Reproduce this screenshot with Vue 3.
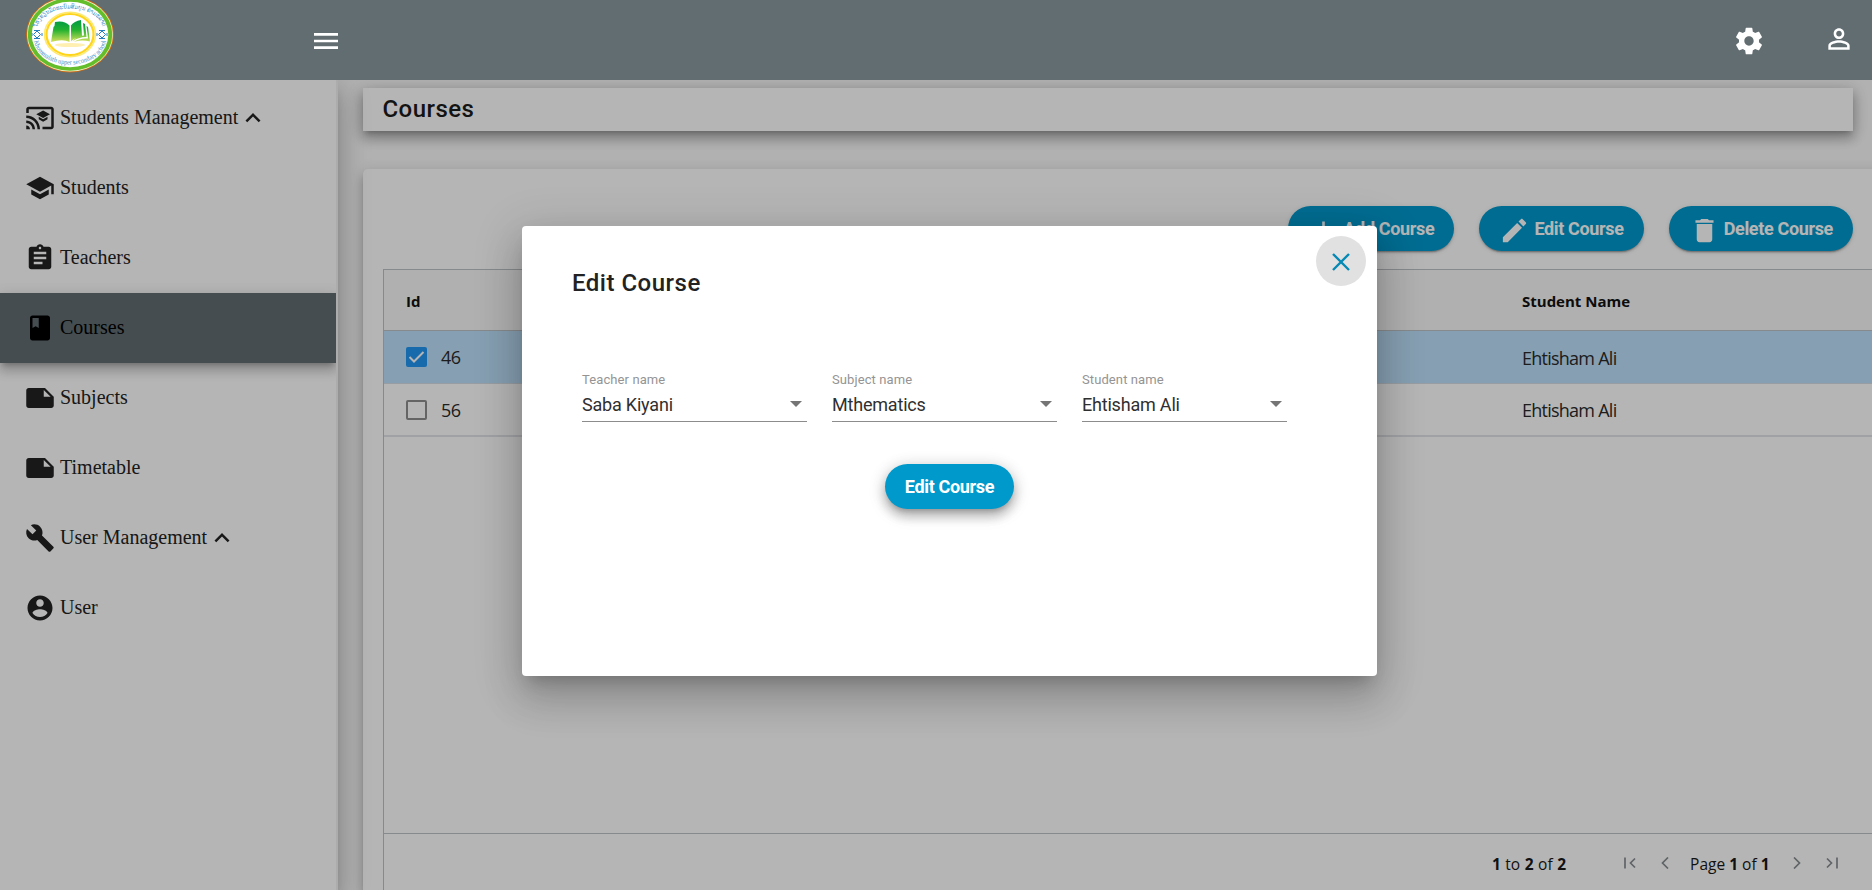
<script setup>
const icons = {
  cast: 'M21 3H3c-1.1 0-2 .9-2 2v3h2V5h18v14h-7v2h7c1.1 0 2-.9 2-2V5c0-1.1-.9-2-2-2zM1 18v3h3c0-1.66-1.34-3-3-3zm0-4v2c2.76 0 5 2.24 5 5h2c0-3.87-3.13-7-7-7zm0-4v2c4.97 0 9 4.03 9 9h2c0-6.08-4.93-11-11-11zm10 1.09v2L14.5 15l3.5-1.91v-2L14.5 13 11 11.090zM14.5 6L9 9l5.5 3L20 9l-5.500-3z',
  school: 'M5 13.180v4L12 21l7-3.820v-4L12 17l-7-3.820zM12 3L1 9l11 6 9-4.910V17h2V9L12 3z',
  assignment: 'M19 3h-4.180C14.400 1.840 13.300 1 12 1c-1.300 0-2.400.840-2.820 2H5c-1.100 0-2 .900-2 2v14c0 1.100.900 2 2 2h14c1.100 0 2-.900 2-2V5c0-1.100-.900-2-2-2zm-7 0c.550 0 1 .450 1 1s-.450 1-1 1-1-.450-1-1 .450-1 1-1zm2 14H7v-2h7v2zm3-4H7v-2h10v2zm0-4H7V7h10v2z',
  book: 'M18 2H6c-1.100 0-2 .900-2 2v16c0 1.100.900 2 2 2h12c1.100 0 2-.900 2-2V4c0-1.100-.900-2-2-2zM6 4h5v8l-2.500-1.500L6 12V4z',
  note: 'M3 4c-1.100 0-1.990.900-1.990 2L1 18c0 1.100.900 2 2 2h18c1.100 0 2-.900 2-2V11l-7-7H3zm12 7V5.500l5.500 5.500H15z',
  build: 'M22.700 19l-9.100-9.100c.900-2.300.400-5-1.500-6.900-2-2-5-2.400-7.400-1.300L9 6 6 9 1.600 4.700C.400 7.100.900 10.100 2.900 12.100c1.900 1.900 4.600 2.400 6.900 1.500l9.100 9.100c.400.400 1 .400 1.400 0l2.300-2.300c.500-.400.500-1.100.100-1.400z',
  account: 'M12 2C6.480 2 2 6.480 2 12s4.480 10 10 10 10-4.480 10-10S17.520 2 12 2zm0 3c1.660 0 3 1.340 3 3s-1.340 3-3 3-3-1.340-3-3 1.340-3 3-3zm0 14.200c-2.500 0-4.710-1.280-6-3.220.030-1.990 4-3.080 6-3.080 1.990 0 5.970 1.090 6 3.080-1.290 1.940-3.500 3.220-6 3.220z',
  less: 'M12 8l-6 6 1.410 1.410L12 10.830l4.590 4.580L18 14z',
  menu: 'M3 18h18v-2H3v2zm0-5h18v-2H3v2zm0-7v2h18V6H3z',
  settings: 'M19.430 12.980c.040-.320.070-.640.070-.980s-.030-.660-.070-.980l2.110-1.650c.190-.150.240-.420.120-.640l-2-3.460c-.120-.220-.390-.300-.610-.220l-2.490 1c-.520-.400-1.080-.730-1.690-.980l-.380-2.650C14.460 2.180 14.250 2 14 2h-4c-.250 0-.460.180-.490.420l-.380 2.650c-.610.250-1.170.590-1.690.980l-2.490-1c-.230-.090-.490 0-.610.220l-2 3.460c-.130.220-.070.490.120.640l2.110 1.650c-.040.320-.070.650-.070.980s.030.660.070.980l-2.110 1.650c-.190.150-.240.420-.120.640l2 3.460c.120.220.390.300.610.220l2.490-1c.520.400 1.080.730 1.690.980l.380 2.650c.030.240.240.420.490.420h4c.250 0 .460-.180.490-.420l.380-2.650c.610-.250 1.170-.590 1.690-.980l2.490 1c.230.090.490 0 .610-.220l2-3.460c.120-.220.070-.490-.120-.640l-2.110-1.650zM12 15.500c-1.930 0-3.500-1.570-3.500-3.500s1.570-3.500 3.500-3.500 3.500 1.570 3.500 3.500-1.570 3.500-3.500 3.500z',
  person: 'M12 5.900c1.160 0 2.100.940 2.100 2.100s-.940 2.100-2.100 2.100S9.900 9.160 9.900 8s.940-2.100 2.100-2.100m0 9c2.970 0 6.100 1.460 6.100 2.100v1.100H5.900V17c0-.640 3.130-2.100 6.100-2.100M12 4C9.790 4 8 5.790 8 8s1.790 4 4 4 4-1.790 4-4-1.790-4-4-4zm0 9c-2.670 0-8 1.340-8 4v3h16v-3c0-2.660-5.330-4-8-4z',
  add: 'M19 13h-6v6h-2v-6H5v-2h6V5h2v6h6v2z',
  edit: 'M3 17.250V21h3.750L17.810 9.940l-3.750-3.750L3 17.250zM20.710 7.040c.390-.390.390-1.020 0-1.410l-2.340-2.340c-.390-.390-1.020-.390-1.410 0l-1.830 1.830 3.750 3.750 1.830-1.830z',
  trash: 'M6 19c0 1.100.900 2 2 2h8c1.100 0 2-.900 2-2V7H6v12zM19 4h-3.500l-1-1h-5l-1 1H5v2h14V4z'
}

const menu = [
  { label: 'Students Management', icon: 'cast', expanded: true },
  { label: 'Students', icon: 'school' },
  { label: 'Teachers', icon: 'assignment' },
  { label: 'Courses', icon: 'book', active: true },
  { label: 'Subjects', icon: 'note' },
  { label: 'Timetable', icon: 'note' },
  { label: 'User Management', icon: 'build', expanded: true },
  { label: 'User', icon: 'account' }
]

const actions = [
  { label: 'Add Course', icon: 'add' },
  { label: 'Edit Course', icon: 'edit' },
  { label: 'Delete Course', icon: 'trash' }
]

const rows = [
  { id: 46, student: 'Ehtisham Ali', selected: true },
  { id: 56, student: 'Ehtisham Ali', selected: false }
]

const fields = [
  { label: 'Teacher name', value: 'Saba Kiyani' },
  { label: 'Subject name', value: 'Mthematics' },
  { label: 'Student name', value: 'Ehtisham Ali' }
]
</script>

<template>
  <div class="app">
    <header class="topbar">
      <svg class="logo" width="90" height="76" viewBox="0 0 90 76">
        <defs>
          <linearGradient id="leaf" x1="0" y1="0" x2="0" y2="1">
            <stop offset="0" stop-color="#009a45" />
            <stop offset=".45" stop-color="#22b12f" />
            <stop offset="1" stop-color="#d5e05a" />
          </linearGradient>
          <path id="arcTop" d="M12.500 31.500A32.500 20 0 0 1 77.500 31.500" />
          <path id="arcBottom" d="M9 42A36 25.500 0 0 0 81 42" />
        </defs>
        <ellipse cx="45" cy="37.500" rx="44" ry="38" fill="#c96b12" />
        <ellipse cx="45" cy="37.500" rx="43" ry="37" fill="#f3f3d0" />
        <ellipse cx="45" cy="37.500" rx="42.300" ry="36.300" fill="#64bd2b" />
        <ellipse cx="45" cy="37.500" rx="38.300" ry="32.800" fill="#fff" />
        <ellipse cx="45" cy="37.500" rx="25.500" ry="22.300" fill="#fff" stroke="#ffe96b" stroke-width="1.500" />
        <ellipse cx="45" cy="37.500" rx="23.500" ry="20.500" fill="#fff" stroke="#ffd51c" stroke-width="2.200" />
        <text class="ring-text lao"><textPath href="#arcTop" startOffset="50%" text-anchor="middle" textLength="80" lengthAdjust="spacingAndGlyphs">ໂຮງຮຽນມັດທະຍົມສົມບູນ ຄໍາມະລາດ</textPath></text>
        <text class="ring-text"><textPath href="#arcBottom" startOffset="50%" text-anchor="middle" textLength="93" lengthAdjust="spacingAndGlyphs">Khommalath upper secondary school</textPath></text>
        <g fill="none" stroke="#287fc0" stroke-width="1">
          <path d="M12 34l3.500 3.500-3.500 3.500-3.500-3.500z" /><path d="M9 33.500h6M9 41.500h6M7 36v3M17 36v3" />
          <path d="M77 34l3.500 3.500-3.500 3.500-3.500-3.500z" /><path d="M74 33.500h6M74 41.500h6M72 36v3M82 36v3" />
        </g>
        <ellipse cx="45" cy="48" rx="15" ry="2" fill="#ffefb0" />
        <path fill="url(#leaf)" d="M30 25Q39 23 44.500 28.500V45Q38 41.500 26 45L28.500 30L29.500 29ZM46 28.500Q49 24 56 23L57 39Q50 40 46 44.500ZM58 26L60 27L61.500 40Q53 40 47.500 44.500Q51 39 59 38.500ZM61.500 29L63 30L65 44.500Q56 42.500 49 45Q54 41 63 41.500Z" />
      </svg>
      <svg class="icon-lg burger" viewBox="0 0 24 24"><path :d="icons.menu" /></svg>
      <svg class="icon-lg gear" viewBox="0 0 24 24"><path :d="icons.settings" /></svg>
      <svg class="icon-lg person" viewBox="0 0 24 24"><path :d="icons.person" /></svg>
    </header>

    <div class="body">
      <nav class="sidebar">
        <a v-for="item in menu" :key="item.label" class="nav-item" :class="{ active: item.active }">
          <svg class="nav-icon" viewBox="0 0 24 24"><path :d="icons[item.icon]" /></svg>
          <span class="nav-label">{{ item.label }}</span>
          <svg v-if="item.expanded" class="nav-chevron" viewBox="0 0 24 24"><path :d="icons.less" /></svg>
        </a>
      </nav>

      <main class="content">
        <h1 class="page-title">Courses</h1>
        <section class="card">
          <div class="actions">
            <button v-for="a in actions" :key="a.label" class="pill">
              <svg class="pill-icon" viewBox="0 0 24 24"><path :d="icons[a.icon]" /></svg>
              <span class="pill-text">{{ a.label }}</span>
            </button>
          </div>
          <div class="grid">
            <div class="grid-row grid-head"><span class="col-id">Id</span><span>Student Name</span></div>
            <div v-for="r in rows" :key="r.id" class="grid-row" :class="{ selected: r.selected }">
              <span class="col-id">
                <i class="check" :class="{ on: r.selected }">
                  <svg v-if="r.selected" width="21" height="20" viewBox="0 0 21 20"><path d="M3.500 10L8 14.500L17.500 5" fill="none" stroke="#fff" stroke-width="2" /></svg>
                </i>{{ r.id }}
              </span>
              <span class="cell">{{ r.student }}</span>
            </div>
            <div class="grid-space"></div>
            <footer class="pager">
              <span class="range"><b>1</b> to <b>2</b> of <b>2</b></span>
              <svg class="pg first" width="12" height="12" viewBox="0 0 12 12"><path d="M1 .500v11M11 1.500L6.500 6L11 10.500" /></svg>
              <svg class="pg prev" width="8" height="12" viewBox="0 0 8 12"><path d="M7 .500L1.500 6L7 11.500" /></svg>
              <span class="page"><span>Page</span> <b>1</b> of <b>1</b></span>
              <svg class="pg next" width="8" height="12" viewBox="0 0 8 12"><path d="M1 .500L6.500 6L1 11.500" /></svg>
              <svg class="pg last" width="12" height="12" viewBox="0 0 12 12"><path d="M11 .500v11M1 1.500L5.500 6L1 10.500" /></svg>
            </footer>
          </div>
        </section>
      </main>
    </div>

    <div class="backdrop">
      <div class="dialog">
        <button class="close"><svg width="18" height="18" viewBox="0 0 18 18"><path d="M1 1l16 16M17 1L1 17" fill="none" stroke="#0489b5" stroke-width="2.400" /></svg></button>
        <h2 class="dialog-title">Edit Course</h2>
        <div class="fields">
          <div v-for="f in fields" :key="f.label" class="field">
            <label class="field-label">{{ f.label }}</label>
            <div class="field-value"><span>{{ f.value }}</span><i class="arrow"></i></div>
          </div>
        </div>
        <button class="pill submit"><span class="pill-text">Edit Course</span></button>
      </div>
    </div>
  </div>
</template>

<style>
html, body { margin: 0; overflow: hidden; }
</style>

<style scoped>
* { box-sizing: border-box; }
.app { position: relative; width: 1872px; height: 890px; overflow: hidden; display: flex; flex-direction: column; background: #fafafa; font-family: Roboto, sans-serif; }
.topbar { position: relative; z-index: 5; flex: none; height: 80px; padding: 0 17px 0 25px; display: flex; align-items: center; background: #626d72; }
.logo { align-self: flex-start; margin-top: -3px; flex: none; }
.ring-text { font: 7px "Liberation Serif", serif; fill: #3d8fca; }
.ring-text.lao { font: 6px "DejaVu Sans", sans-serif; }
.icon-lg { width: 32px; height: 32px; flex: none; fill: #fff; }
.burger { margin: 2px 0 0 195px; }
.gear { margin: 2px 0 0 auto; }
.person { margin: -2px 0 0 58px; }

.body { flex: 1; min-height: 0; display: flex; }
.sidebar { position: relative; z-index: 2; flex: none; width: 338px; padding-top: 3px; background: #fff; border-right: 2px solid #f3f3f3; box-shadow: 0 8px 10px -5px rgba(0,0,0,.2), 0 16px 24px 2px rgba(0,0,0,.14), 0 6px 30px 5px rgba(0,0,0,.12); }
.nav-item { display: flex; align-items: center; height: 70px; padding-left: 25px; color: #222; }
.nav-item.active { position: relative; color: #000; background: #626d72; box-shadow: 0 5px 5px -3px rgba(0,0,0,.2), 0 8px 10px 1px rgba(0,0,0,.14), 0 3px 14px 2px rgba(0,0,0,.12); clip-path: inset(-10px 0 -30px 0); }
.nav-icon, .nav-chevron { width: 30px; height: 30px; fill: currentColor; flex: none; }
.nav-label { margin-left: 5px; padding-bottom: 2px; font: 20px/30px "Liberation Serif", serif; }

.content { flex: 1; min-width: 0; padding: 8px 0 0 25px; display: flex; flex-direction: column; }
.page-title { flex: none; width: 1490px; height: 43px; margin: 0; padding-left: 19.500px; background: #fff; font: 500 24px/43px Roboto, sans-serif; letter-spacing: .45px; color: #1c1c1c; box-shadow: 0 5px 5px -3px rgba(0,0,0,.2), 0 8px 10px 1px rgba(0,0,0,.14), 0 3px 14px 2px rgba(0,0,0,.12), 0 4px 20px rgba(0,0,0,.12); }
.card { flex: 1; width: 1540px; margin-top: 38px; padding: 37px 0 0 20px; display: flex; flex-direction: column; background: #fff; border-radius: 5px 0 0 0; box-shadow: 0 5px 5px -3px rgba(0,0,0,.2), 0 8px 10px 1px rgba(0,0,0,.14), 0 3px 14px 2px rgba(0,0,0,.12); }
.actions { display: flex; justify-content: flex-end; gap: 25px; padding-right: 50px; }
.pill { display: flex; align-items: center; height: 45px; padding: 0 20px; border: 0; border-radius: 23px; background: #09c; color: #fff; box-shadow: 0 3px 1px -2px rgba(0,0,0,.2), 0 2px 2px rgba(0,0,0,.14), 0 1px 5px rgba(0,0,0,.12); }
.pill-icon { width: 31px; height: 31px; margin: 4px 4px 0 0; fill: #fff; }
.pill-text { font: 700 18px/45px Roboto, sans-serif; letter-spacing: -.34px; white-space: nowrap; }

.grid { flex: 1; margin-top: 18px; border: 1px solid #bfc3c6; border-bottom: 0; display: flex; flex-direction: column; font: 18px "Open Sans", sans-serif; color: #2a2a2a; }
.grid-row { display: flex; align-items: center; height: 53px; padding-left: 22px; border-bottom: 2px solid #e2e3e8; }
.grid-head { height: 61px; padding-left: 22px; padding-top: 2px; background: #f8f8f8; border-bottom: 1px solid #bfc3c6; font: 700 15px "Open Sans", sans-serif; color: #111; }
.grid-row.selected { background: #bde0fb; border-bottom-color: #d5dde5; border-bottom-width: 1px; }
.col-id { width: 1116px; flex: none; display: flex; align-items: center; letter-spacing: -.6px; }
.grid-head .col-id { letter-spacing: 0; }
.cell { letter-spacing: -.75px; padding-top: 1px; }
.check { width: 21px; height: 20px; margin-right: 14px; border: 2px solid #8d8d8d; border-radius: 2px; flex: none; }
.check.on { border: 0; background: #2196f3; }
.check svg { display: block; }
.grid-space { flex: 1; }
.pager { flex: none; height: 57px; padding: 4px 50px 0 0; border-top: 1px solid #bfc3c6; display: flex; align-items: center; justify-content: flex-end; font-size: 15.500px; color: #181818; }
.pg { fill: none; stroke: #878d92; stroke-width: 1.700; flex: none; margin-top: -3px; }
.range, .page { white-space: pre; }
.range { word-spacing: .5px; }
.first { margin-left: 58px; }
.prev { margin-left: 25px; }
.page { margin-left: 21px; }
.next { margin-left: 23px; }
.last { margin: -3px 14.500px 0 25px; }

.backdrop { position: absolute; inset: 0; z-index: 4; background: rgba(0,0,0,.29); }
.dialog { position: absolute; left: 522px; top: 226px; width: 855px; height: 450px; padding: 37px 50px 0; border-radius: 4px; background: #fff; box-shadow: 0 11px 15px -7px rgba(0,0,0,.2), 0 24px 38px 3px rgba(0,0,0,.14), 0 9px 46px 8px rgba(0,0,0,.12); }
.close { position: absolute; top: 10px; right: 11px; width: 50px; height: 50px; padding: 2px 0 0; border: 0; border-radius: 50%; background: #e1e1e1; display: flex; align-items: center; justify-content: center; }
.dialog-title { margin: 0; font: 500 24px/40px Roboto, sans-serif; letter-spacing: .5px; color: #222; }
.fields { display: grid; grid-template-columns: 225px 225px 205px; gap: 25px; margin: 69px 0 0 10px; }
.field { border-bottom: 1px solid #8c8c8c; height: 50px; }
.field-label { display: block; font-size: 13px; line-height: 16px; letter-spacing: .1px; color: #949494; }
.field-value { display: flex; justify-content: space-between; align-items: center; height: 32px; padding-right: 5px; font-size: 18px; letter-spacing: -.2px; color: #2f2f2f; }
.arrow { width: 0; height: 0; border: 6px solid transparent; border-top-color: #757575; border-bottom: 0; }
.submit { margin: 42px auto 0; box-shadow: 0 5px 5px -3px rgba(0,0,0,.2), 0 8px 10px 1px rgba(0,0,0,.14), 0 3px 14px 2px rgba(0,0,0,.12), 0 4px 20px rgba(0,0,0,.1); }
</style>
